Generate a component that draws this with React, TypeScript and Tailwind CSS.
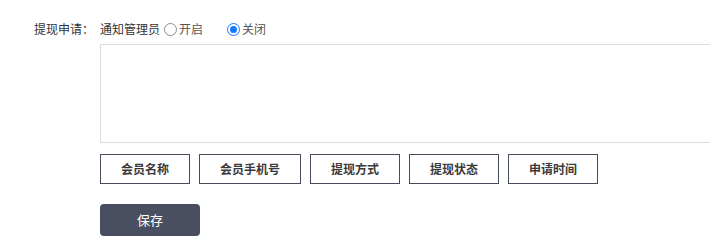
import { useState } from 'react';

const fields = ['会员名称', '会员手机号', '提现方式', '提现状态', '申请时间'];

const App = () => {
    const [notify, setNotify] = useState('off');
    const [content, setContent] = useState('');

    return (
        <div
            className="w-full h-[249px] overflow-hidden bg-white text-[12px] text-[#333]"
            style={{ fontFamily: '"Microsoft YaHei", "Noto Sans CJK SC", sans-serif' }}
        >
            <div className="flex pt-[20px]">
                <div className="w-[100px] shrink-0 pr-[6px] text-right leading-[18px]">提现申请：</div>
                <div className="flex flex-col w-[680px] shrink-0">
                    {/* Notify option */}
                    <div className="flex items-center h-[18px] leading-[18px]">
                        <span>通知管理员</span>
                        <label className="flex items-center ml-[4px] cursor-pointer">
                            <span
                                onClick={() => setNotify('on')}
                                className={
                                    notify === 'on'
                                        ? 'w-[13px] h-[13px] rounded-full border border-[#1677ff] flex items-center justify-center'
                                        : 'w-[13px] h-[13px] rounded-full border border-[#8c8c8c]'
                                }
                            >
                                {notify === 'on' && <span className="w-[7px] h-[7px] rounded-full bg-[#1677ff]" />}
                            </span>
                            <span className="ml-[2px] text-[#555]">开启</span>
                        </label>
                        <label className="flex items-center ml-[24px] cursor-pointer">
                            <span
                                onClick={() => setNotify('off')}
                                className={
                                    notify === 'off'
                                        ? 'w-[13px] h-[13px] rounded-full border border-[#1677ff] flex items-center justify-center'
                                        : 'w-[13px] h-[13px] rounded-full border border-[#8c8c8c]'
                                }
                            >
                                {notify === 'off' && <span className="w-[7px] h-[7px] rounded-full bg-[#1677ff]" />}
                            </span>
                            <span className="ml-[2px] text-[#555]">关闭</span>
                        </label>
                    </div>

                    {/* Message body */}
                    <textarea
                        value={content}
                        onChange={e => setContent(e.target.value)}
                        className="mt-[6px] h-[99px] w-[680px] border border-[#dcdcdc] resize-none outline-none p-[6px]"
                    />

                    {/* Insert variable buttons */}
                    <div className="flex gap-[9px] mt-[11px]">
                        {fields.map(f => (
                            <button
                                key={f}
                                className="h-[30px] px-[20px] border border-[#464c5b] text-[12px] font-semibold text-[#3a3a3a] bg-white"
                            >
                                {f}
                            </button>
                        ))}
                    </div>

                    <div className="mt-[20px]">
                        <button className="w-[100px] h-[32px] rounded-[4px] bg-[#494f61] text-white text-[13px]">
                            保存
                        </button>
                    </div>
                </div>
            </div>
        </div>
    );
};

export default App;
